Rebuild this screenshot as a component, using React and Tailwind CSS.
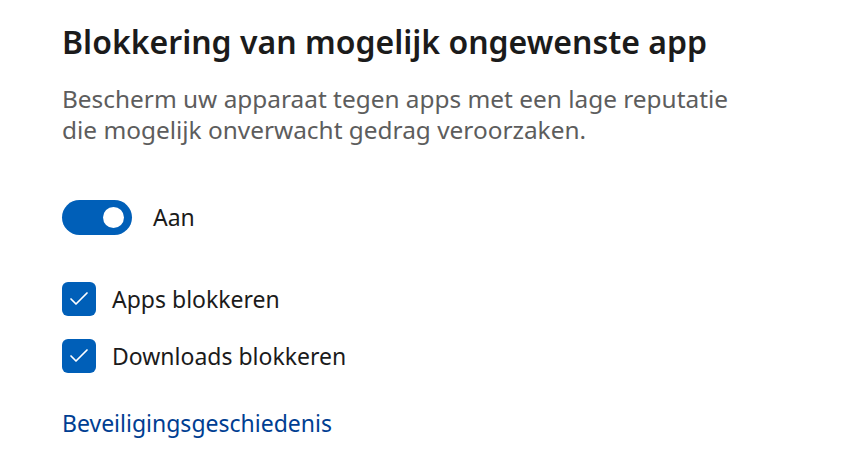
import { Check } from 'lucide-react';

function Toggle({ on }) {
  return (
    <div className={`flex h-[35px] w-[70px] items-center rounded-full px-[8px] ${on ? 'justify-end bg-[#005fb8]' : 'justify-start border-2 border-gray-500'}`}>
      <div className="h-[21px] w-[21px] rounded-full bg-white" />
    </div>
  );
}

function CheckRow({ label }) {
  return (
    <label className="flex items-center gap-[16px]">
      <span className="flex h-[34px] w-[34px] items-center justify-center rounded-[6px] bg-[#005fb8]">
        <Check className="h-[24px] w-[24px] text-white" strokeWidth={1.7} />
      </span>
      <span className="text-[23px] leading-[34px] text-[#1b1b1b]">{label}</span>
    </label>
  );
}

export default function App() {
  return (
    <div className="min-h-[470px] bg-white px-[62px] pt-[20px]" style={{ fontFamily: '"Noto Sans", "Open Sans", sans-serif' }}>
      <h1 className="text-[32px] font-semibold leading-[44px] text-[#1b1b1b]">
        Blokkering van mogelijk ongewenste app
      </h1>
      <p className="mt-[19px] max-w-[740px] text-[24.4px] leading-[31px] text-[#5d5d5d]">
        Bescherm uw apparaat tegen apps met een lage reputatie
        <br />
        die mogelijk onverwacht gedrag veroorzaken.
      </p>
      <div className="mt-[55px] flex items-center gap-[21px]">
        <Toggle on />
        <span className="text-[23px] text-[#1b1b1b]">Aan</span>
      </div>
      <div className="mt-[47px] flex flex-col gap-[23px]">
        <CheckRow label="Apps blokkeren" />
        <CheckRow label="Downloads blokkeren" />
      </div>
      <a href="#" className="mt-[33px] block text-[23px] text-[#003e92]">
        Beveiligingsgeschiedenis
      </a>
    </div>
  );
}
